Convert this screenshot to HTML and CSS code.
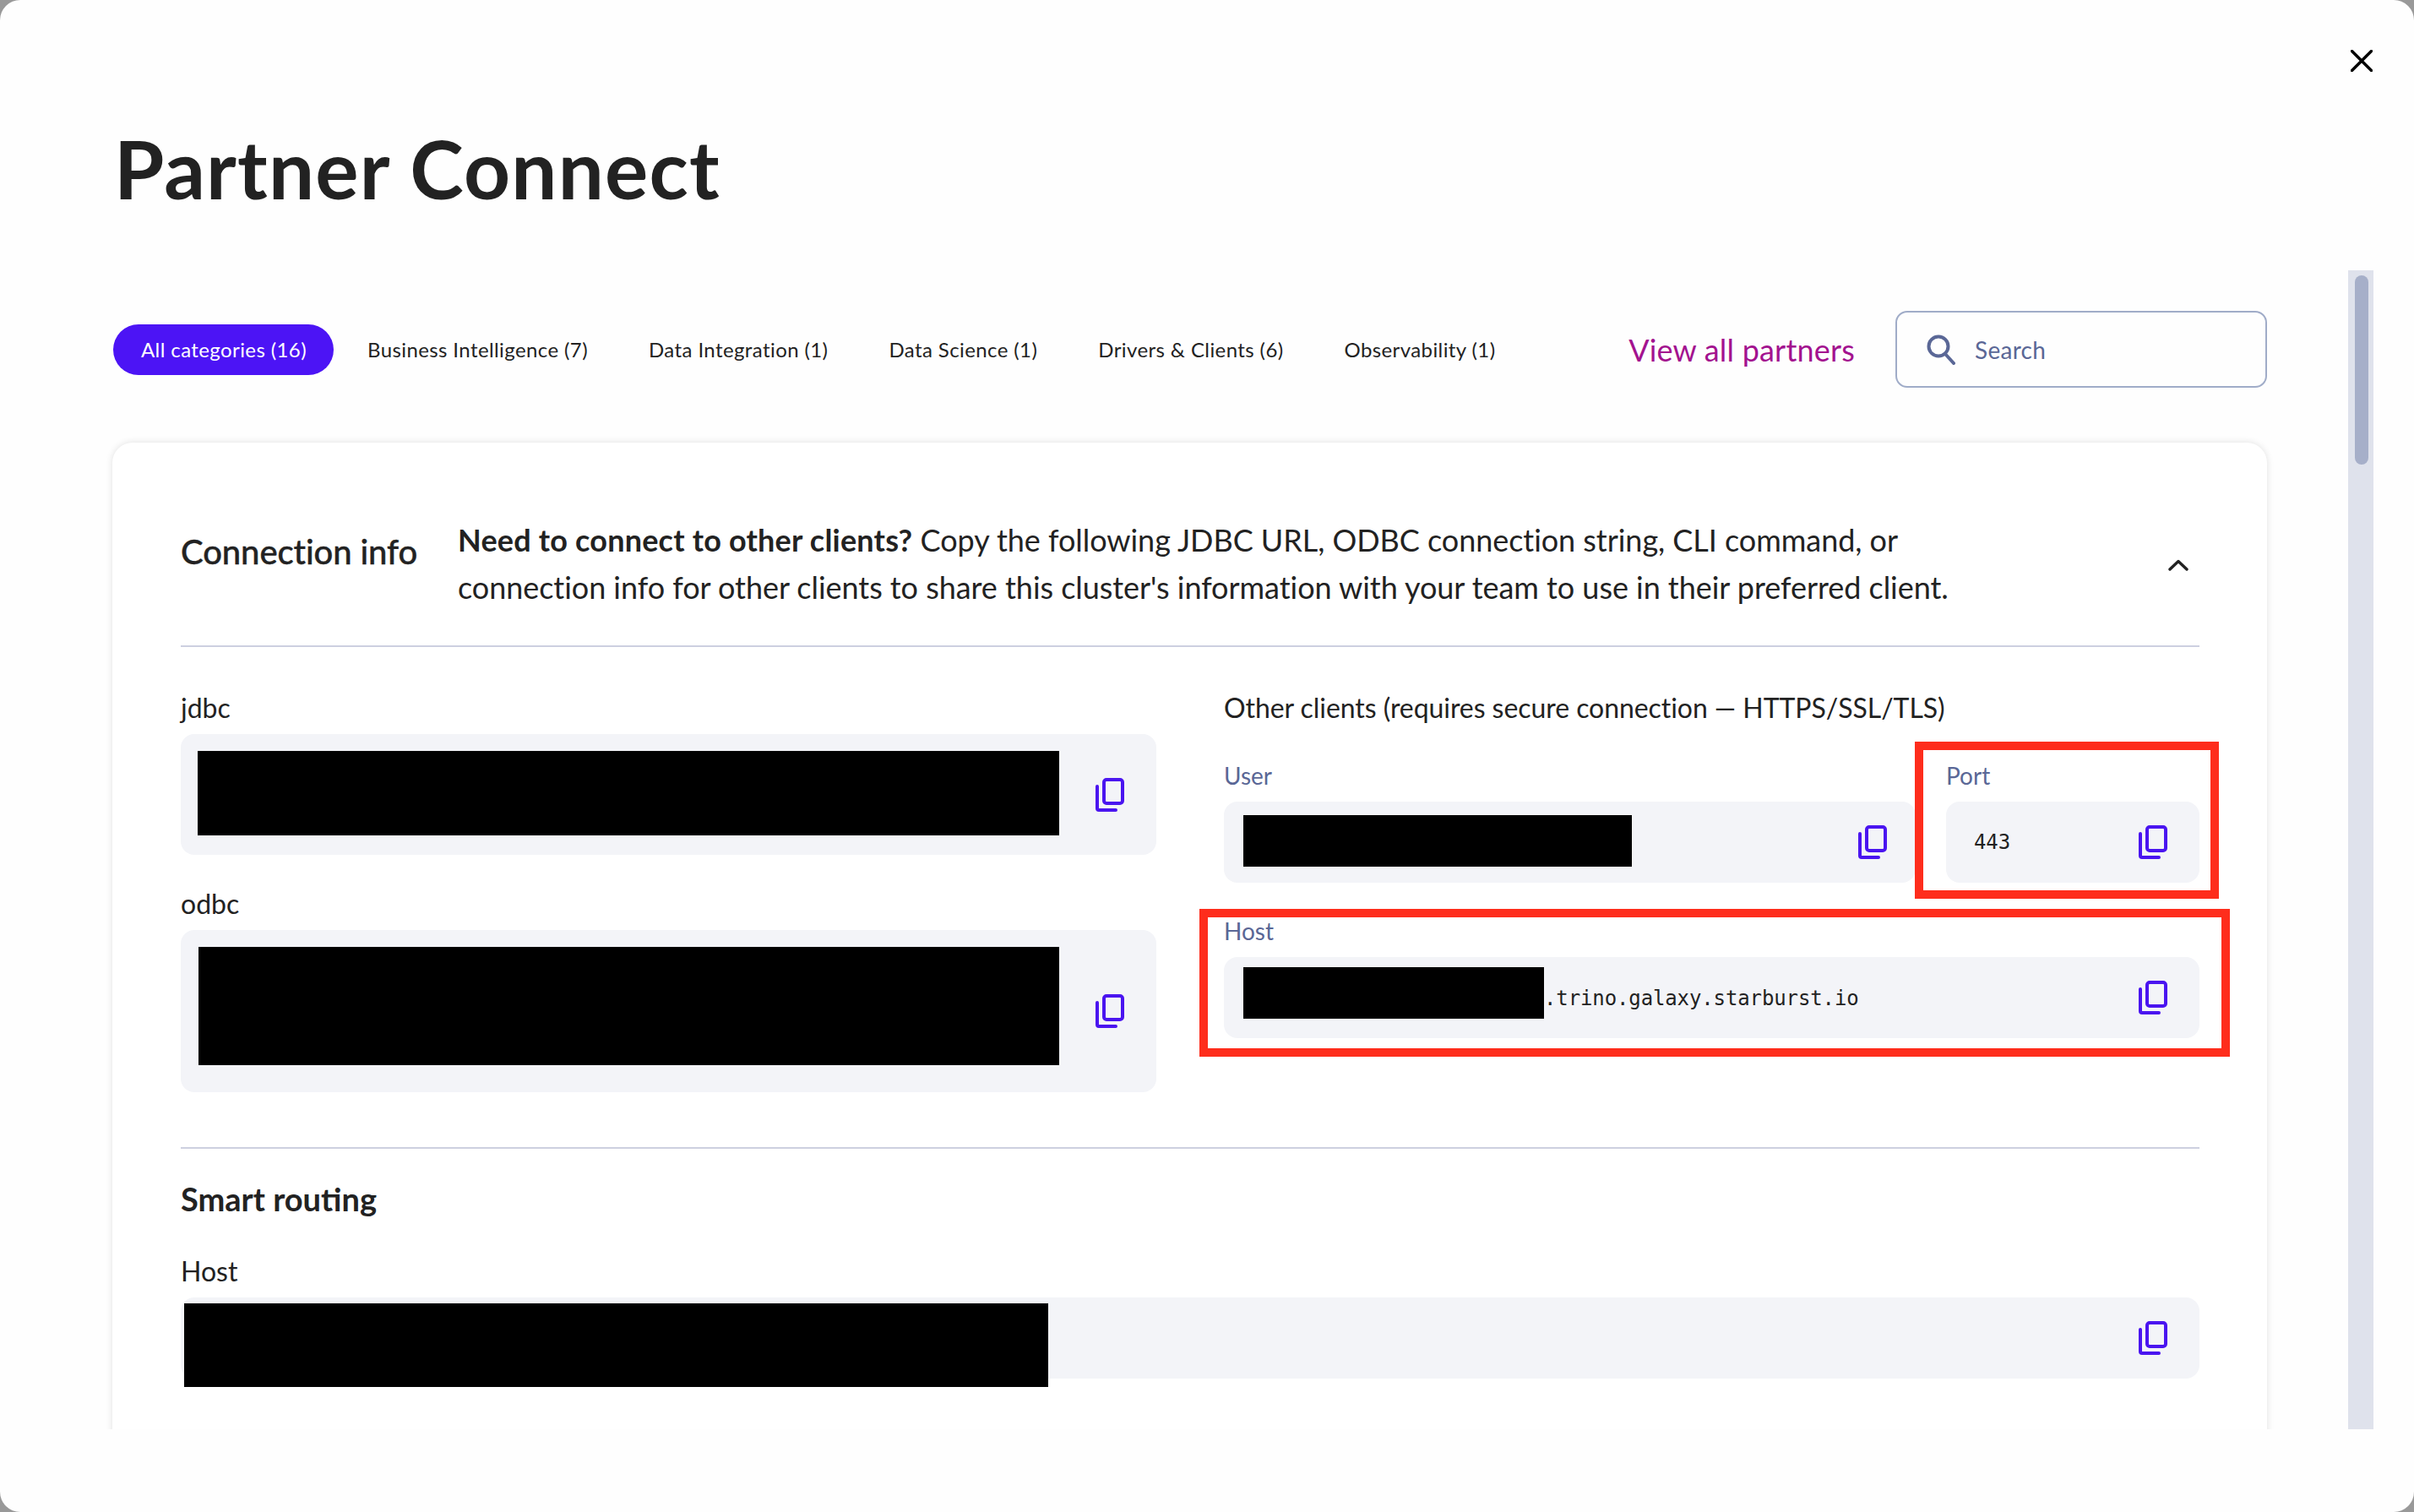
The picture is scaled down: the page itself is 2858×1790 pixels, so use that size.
FILE: index.html
```html
<!DOCTYPE html>
<html lang="en">
<head>
<meta charset="utf-8">
<title>Partner Connect</title>
<link rel="stylesheet" href="styles.css">
</head>
<body>
<svg class="sprite" width="0" height="0" aria-hidden="true">
  <symbol id="copy" viewBox="0 0 34 40">
    <rect x="10" y="2" width="22" height="28" rx="3" fill="none" stroke="currentColor" stroke-width="4"/>
    <path d="M2 10V36a2 2 0 0 0 2 2H24" fill="none" stroke="currentColor" stroke-width="4" stroke-linecap="round"/>
  </symbol>
</svg>
<main class="modal">
  <button class="close" aria-label="Close">
    <svg viewBox="0 0 26 26" width="26" height="26"><path d="M1.5 1.5L24.5 24.5M24.5 1.5L1.5 24.5" fill="none" stroke="#000" stroke-width="3.4" stroke-linecap="round"/></svg>
  </button>
  <h1 class="title">Partner Connect</h1>
  <div class="scroll">
    <div class="content">
      <div class="toolbar">
        <nav class="tabs">
          <span class="tab tab-active">All categories (16)</span>
          <span class="tab">Business Intelligence (7)</span>
          <span class="tab">Data Integration (1)</span>
          <span class="tab">Data Science (1)</span>
          <span class="tab">Drivers &amp; Clients (6)</span>
          <span class="tab">Observability (1)</span>
        </nav>
        <a class="view-all">View all partners</a>
        <div class="search">
          <svg class="search-icon" viewBox="0 0 34 36" width="34" height="36"><circle cx="14" cy="14" r="11.5" fill="none" stroke="#5a6796" stroke-width="4"/><path d="M22 23L32 34" fill="none" stroke="#5a6796" stroke-width="4" stroke-linecap="round"/></svg>
          <span class="search-text">Search</span>
        </div>
      </div>
      <section class="card">
        <header class="card-head">
          <h2 class="card-title">Connection info</h2>
          <p class="card-desc"><strong>Need to connect to other clients?</strong> Copy the following JDBC URL, ODBC connection string, CLI command, or<br>connection info for other clients to share this cluster's information with your team to use in their preferred client.</p>
          <svg class="chevron" viewBox="0 0 24 14" width="24" height="14"><path d="M2 12L12 2.5L22 12" fill="none" stroke="#222" stroke-width="3.4" stroke-linecap="round" stroke-linejoin="round"/></svg>
        </header>
        <div class="grid">
          <div class="col">
            <div class="label">jdbc</div>
            <div class="box box-jdbc">
              <div class="redact redact-jdbc"></div>
              <svg class="copy"><use href="#copy"/></svg>
            </div>
            <div class="label label-odbc">odbc</div>
            <div class="box box-odbc">
              <div class="redact redact-odbc"></div>
              <svg class="copy"><use href="#copy"/></svg>
            </div>
          </div>
          <div class="col">
            <div class="label label-other">Other clients (requires secure connection — HTTPS/SSL/TLS)</div>
            <div class="row">
              <div class="field field-user">
                <div class="sublabel">User</div>
                <div class="box box-short box-user">
                  <div class="redact redact-user"></div>
                  <svg class="copy"><use href="#copy"/></svg>
                </div>
              </div>
              <div class="field field-port">
                <div class="sublabel">Port</div>
                <div class="box box-short box-port">
                  <span class="mono">443</span>
                  <svg class="copy"><use href="#copy"/></svg>
                </div>
                <div class="mark mark-port"></div>
              </div>
            </div>
            <div class="field field-host">
              <div class="sublabel">Host</div>
              <div class="box box-short box-host">
                <div class="redact redact-host"></div>
                <span class="mono mono-host">.trino.galaxy.starburst.io</span>
                <svg class="copy"><use href="#copy"/></svg>
              </div>
              <div class="mark mark-host"></div>
            </div>
          </div>
        </div>
        <div class="routing">
          <h3 class="routing-title">Smart routing</h3>
          <div class="label">Host</div>
          <div class="box box-short box-route">
            <div class="redact redact-route"></div>
            <svg class="copy"><use href="#copy"/></svg>
          </div>
        </div>
      </section>
    </div>
    <div class="track"><div class="thumb"></div></div>
  </div>
</main>
</body>
</html>
```

FILE: styles.css
```css
* { box-sizing: border-box; }
html, body { margin: 0; padding: 0; }
body {
  background: #999;
  font-family: "Lato", "Noto Sans", sans-serif;
  color: #222;
  overflow: hidden;
}
.sprite { position: absolute; }
.modal {
  position: relative;
  width: 2858px;
  height: 1790px;
  background: #fefefe;
  border-radius: 24px;
  padding-top: 149px;
  overflow: hidden;
}
.close {
  position: absolute;
  top: 59px;
  left: 2783px;
  width: 26px;
  height: 26px;
  padding: 0;
  border: 0;
  background: none;
  display: flex;
}
.title {
  margin: 0 0 71px 135px;
  font-size: 96px;
  line-height: 100px;
  font-weight: 700;
  letter-spacing: 1.2px;
  color: #222;
}
.scroll {
  display: flex;
  height: 1372px;
  padding-left: 133px;
  overflow: hidden;
}
.content { flex: none; width: 2551px; }
.track {
  flex: none;
  width: 30px;
  height: 100%;
  margin-left: 96px;
  background: #dfe2ec;
  padding: 6px 6px 0 8px;
}
.thumb {
  width: 16px;
  height: 224px;
  border-radius: 8px;
  background: #a6afc9;
}
.toolbar {
  display: flex;
  align-items: center;
  height: 91px;
  margin: 48px 0 65px;
}
.tabs { display: flex; align-items: center; margin-left: 1px; }
.tab {
  display: block;
  padding: 0 32px 0 33px;
  margin-right: 7px;
  height: 60px;
  line-height: 60px;
  font-size: 24px;
  letter-spacing: .4px;
  white-space: nowrap;
}
.tab-active { background: #4c14f5; color: #fff; border-radius: 30px; }
.view-all {
  margin-left: auto;
  margin-right: 48px;
  font-size: 36px;
  letter-spacing: .2px;
  color: #a3128f;
  white-space: nowrap;
}
.search {
  display: flex;
  align-items: center;
  width: 440px;
  height: 91px;
  border: 2px solid #a0acc8;
  border-radius: 14px;
  padding-left: 35px;
  color: #5a6796;
}
.search-text { margin-left: 23px; font-size: 28px; letter-spacing: .3px; }
.card {
  background: #fff;
  border-radius: 24px;
  box-shadow: 0 0 8px rgba(0, 0, 0, .12);
  padding: 0 80px 240px 81px;
}
.card-head {
  display: flex;
  align-items: flex-start;
  height: 242px;
  padding-top: 87px;
  border-bottom: 2px solid #cdd0e0;
}
.card-title {
  flex: none;
  width: 328px;
  margin: 18px 0 0;
  font-size: 40px;
  line-height: 48px;
  font-weight: 500;
  letter-spacing: -.1px;
  -webkit-text-stroke: .4px #222;
}
.card-desc {
  margin: 0;
  font-size: 36px;
  line-height: 56px;
  letter-spacing: -.05px;
  white-space: nowrap;
}
.card-desc strong { font-weight: 700; letter-spacing: .2px; }
.chevron { margin: 51px 13px 0 auto; }
.grid {
  display: grid;
  grid-template-columns: 1155px 1155px;
  column-gap: 80px;
  padding-top: 52px;
  height: 594px;
  border-bottom: 2px solid #cdd0e0;
}
.label {
  font-size: 32px;
  line-height: 40px;
  height: 40px;
  margin-bottom: 11px;
  white-space: nowrap;
}
.label-other { letter-spacing: -.06px; }
.label-odbc { margin-top: 38px; }
.box {
  display: flex;
  align-items: center;
  background: #f3f4f8;
  border-radius: 16px;
  padding-right: 38px;
}
.copy { flex: none; width: 34px; height: 40px; color: #4a14f0; margin-left: auto; }
.redact { flex: none; background: #000; align-self: flex-start; }
.box-jdbc { height: 143px; padding-left: 20px; }
.redact-jdbc { width: 1020px; height: 100px; margin-top: 20px; }
.box-odbc { height: 192px; padding-left: 21px; }
.redact-odbc { width: 1019px; height: 140px; margin-top: 20px; }
.row { display: flex; gap: 36px; margin-top: 42px; }
.field { position: relative; }
.field-user { width: 819px; }
.field-port { width: 300px; }
.field-host { margin-top: 39px; }
.sublabel {
  font-size: 28px;
  line-height: 36px;
  height: 36px;
  margin-bottom: 13px;
  color: #5a6796;
}
.box-short { height: 96px; }
.box-user { padding: 0 34px 0 23px; }
.redact-user { width: 460px; height: 61px; margin-top: 16px; }
.box-port { padding: 0 38px 0 33px; }
.box-host { padding: 0 38px 0 23px; }
.redact-host { width: 356px; height: 61px; margin-top: 12px; }
.mono {
  font-family: "DejaVu Sans Mono", monospace;
  font-size: 24px;
  letter-spacing: -.12px;
  color: #222;
}
.mono-host { margin-top: 2px; }
.mark { position: absolute; border: 10px solid #fe2d1c; pointer-events: none; }
.mark-port { top: -22px; left: -37px; width: 360px; height: 186px; }
.mark-host { top: -8px; left: -29px; width: 1220px; height: 175px; }
.routing { padding-top: 37px; }
.routing-title {
  margin: 0 0 44px;
  font-size: 38px;
  line-height: 44px;
  font-weight: 700;
}
.box-route { padding: 0 38px 0 4px; }
.redact-route { width: 1023px; height: 99px; margin-top: 7px; }
```
